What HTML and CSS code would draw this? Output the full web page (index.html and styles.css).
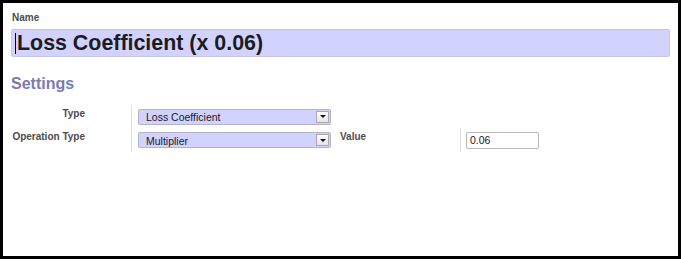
FILE: index.html
```html
<!DOCTYPE html>
<html>
<head>
<meta charset="utf-8">
<link rel="stylesheet" href="styles.css">
</head>
<body>
<div class="frame">
  <div class="name-label">Name</div>
  <div class="name-input"><span class="caret"></span>Loss Coefficient (x 0.06)</div>
  <h2 class="section">Settings</h2>
  <div class="settings">
    <div class="label row1">Type</div>
    <div class="field row1">
      <div class="select"><span class="select-text">Loss Coefficient</span><span class="select-btn"><span class="tri"></span></span></div>
    </div>
    <div class="label row2">Operation Type</div>
    <div class="field row2">
      <div class="select"><span class="select-text">Multiplier</span><span class="select-btn"><span class="tri"></span></span></div>
    </div>
    <div class="label2 row2">Value</div>
    <div class="field field2 row2">
      <div class="text-input">0.06</div>
    </div>
  </div>
</div>
</body>
</html>
```
FILE: styles.css
```css
html, body {
  margin: 0;
  padding: 0;
  background: #fff;
}
.frame {
  width: 681px;
  height: 259px;
  box-sizing: border-box;
  border: 3px solid #000;
  padding: 9px 8px 0 8px;
  font-family: "Liberation Sans", Arial, sans-serif;
}
.name-label {
  font-size: 10px;
  line-height: 12px;
  font-weight: bold;
  color: #4c4c4c;
  padding-left: 1px;
}
.name-input {
  margin-top: 5px;
  height: 28px;
  box-sizing: border-box;
  border: 1px solid #c8c8d8;
  border-radius: 2px;
  background: #d2d2ff;
  font-size: 21.4px;
  font-weight: bold;
  color: #1c1c1c;
  line-height: 26px;
  padding-left: 3px;
  display: flex;
  align-items: center;
}
.caret {
  display: inline-block;
  width: 1px;
  height: 21px;
  background: #000;
  margin-right: 1px;
}
.section {
  margin: 18px 0 0 0;
  font-size: 16px;
  line-height: 18px;
  font-weight: bold;
  color: #7b7bb0;
}
.settings {
  margin-top: 12px;
  display: grid;
  grid-template-columns: 120px 204px 125px 80px;
  grid-template-rows: 23px 24px;
}
.row1 { grid-row: 1; }
.row2 { grid-row: 2; }
.label {
  grid-column: 1;
  text-align: right;
  padding: 3px 46px 0 0;
  font-size: 10px;
  line-height: 12px;
  font-weight: bold;
  color: #4c4c4c;
}
.label2 {
  grid-column: 3;
  padding: 3px 0 0 5px;
  font-size: 10px;
  line-height: 12px;
  font-weight: bold;
  color: #4c4c4c;
}
.field {
  grid-column: 2;
  border-left: 1px solid #dcdcdc;
  padding-left: 6px;
  display: flex;
  align-items: center;
}
.field2 {
  grid-column: 4;
  padding-left: 5px;
}
.select {
  width: 193px;
  height: 16px;
  box-sizing: border-box;
  border: 1px solid #b4b4c4;
  border-radius: 2px;
  background: #d2d2ff;
  display: flex;
  align-items: center;
  justify-content: space-between;
  padding: 0 1px 0 7px;
}
.select-text {
  font-size: 10.5px;
  color: #1a1a1a;
  line-height: 14px;
  padding-top: 1px;
}
.select-btn {
  width: 13px;
  height: 12px;
  box-sizing: border-box;
  border: 1px solid #a8a8a8;
  background: linear-gradient(#ffffff, #e4e4e4);
  display: flex;
  align-items: center;
  justify-content: center;
}
.tri {
  width: 0;
  height: 0;
  border-left: 3px solid transparent;
  border-right: 3px solid transparent;
  border-top: 3px solid #111;
}
.text-input {
  width: 73px;
  height: 17px;
  box-sizing: border-box;
  border: 1px solid #b8b8b8;
  border-radius: 2px;
  background: #fff;
  font-size: 10.5px;
  line-height: 15px;
  color: #1a1a1a;
  padding-left: 3px;
}
```
